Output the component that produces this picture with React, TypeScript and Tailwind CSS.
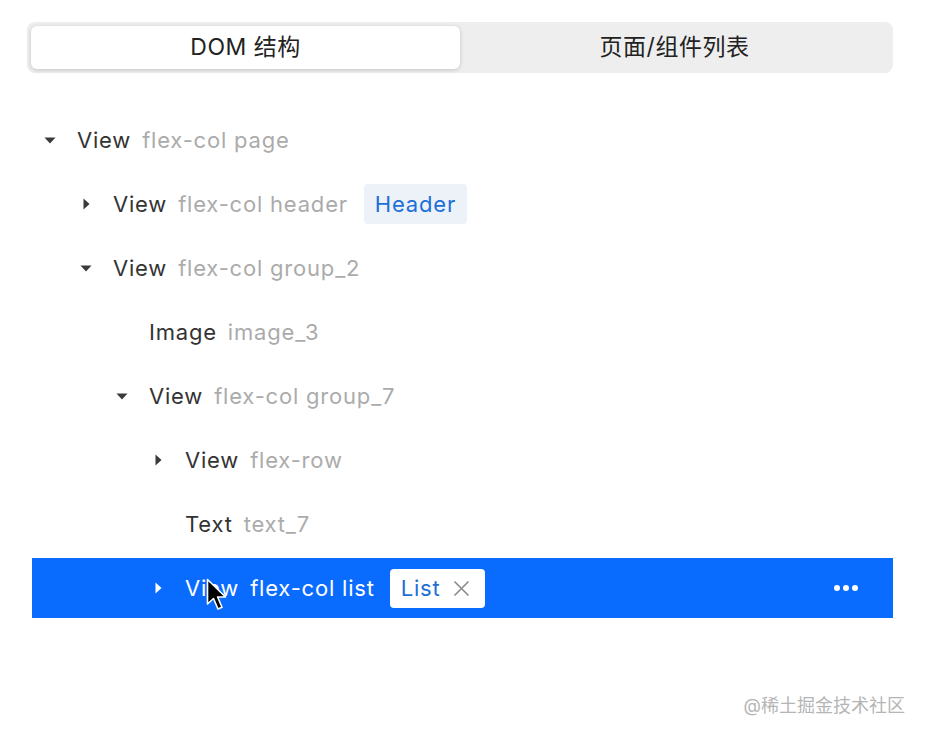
import React from 'react'

type Node = {
    tag: string
    cls: string
    level: number
    arrow?: 'down' | 'right'
    badge?: string
    selected?: boolean
}

const nodes: Node[] = [
    { tag: 'View', cls: 'flex-col page', level: 0, arrow: 'down' },
    { tag: 'View', cls: 'flex-col header', level: 1, arrow: 'right', badge: 'Header' },
    { tag: 'View', cls: 'flex-col group_2', level: 1, arrow: 'down' },
    { tag: 'Image', cls: 'image_3', level: 2 },
    { tag: 'View', cls: 'flex-col group_7', level: 2, arrow: 'down' },
    { tag: 'View', cls: 'flex-row', level: 3, arrow: 'right' },
    { tag: 'Text', cls: 'text_7', level: 3 },
    { tag: 'View', cls: 'flex-col list', level: 3, arrow: 'right', badge: 'List', selected: true },
]

const Arrow = ({ dir, light }: { dir?: 'down' | 'right'; light?: boolean }) => {
    const fill = light ? '#ffffff' : '#3a3a3a'
    return (
        <span className="w-[12px] h-[12px] flex items-center justify-center shrink-0">
            {dir === 'down' && (
                <svg width="12" height="7" viewBox="0 0 12 7">
                    <path d="M0.5 0.5 L11.5 0.5 L6 6.5 Z" fill={fill} />
                </svg>
            )}
            {dir === 'right' && (
                <svg width="7" height="12" viewBox="0 0 7 12">
                    <path d="M0.5 0.5 L6.5 6 L0.5 11.5 Z" fill={fill} />
                </svg>
            )}
        </span>
    )
}

const Row = ({ node }: { node: Node }) => {
    const sel = node.selected
    return (
        <div
            className={`h-[60px] flex items-center pr-[35px] ${sel ? 'bg-[#0a6cff]' : ''}`}
            style={{ paddingLeft: 12 + node.level * 36 }}
        >
            <Arrow dir={node.arrow} light={sel} />
            <span className={`ml-[21px] ${sel ? 'text-white' : 'text-[#333333]'}`}>{node.tag}</span>
            <span className={`ml-[11px] ${sel ? 'text-white' : 'text-[#ababab]'}`}>{node.cls}</span>
            {node.badge && !sel && (
                <span className="ml-[16px] h-[40px] px-[11px] flex items-center rounded-[4px] bg-[#edf2f8] text-[#1d6fd8]">
                    {node.badge}
                </span>
            )}
            {node.badge && sel && (
                <span className="ml-[15px] h-[39px] pl-[11px] pr-[15px] flex items-center rounded-[4px] bg-white text-[#1f6fd3]">
                    {node.badge}
                    <svg className="ml-[12px]" width="17" height="17" viewBox="0 0 17 17">
                        <path d="M1.5 1.5 L15.5 15.5 M15.5 1.5 L1.5 15.5" stroke="#8a8a8a" strokeWidth="1.6" />
                    </svg>
                </span>
            )}
            {sel && (
                <span className="ml-auto flex items-center gap-[3px]">
                    <span className="w-[6px] h-[6px] rounded-full bg-white" />
                    <span className="w-[6px] h-[6px] rounded-full bg-white" />
                    <span className="w-[6px] h-[6px] rounded-full bg-white" />
                </span>
            )}
        </div>
    )
}

export default function App() {
    return (
        <div
            className="relative w-full h-[737px] bg-white overflow-hidden text-[22px] tracking-[0.8px]"
            style={{ fontFamily: 'Inter, "Noto Sans CJK SC", sans-serif' }}
        >
            <div className="ml-[27px] mr-[33px] mt-[22px] h-[51px] p-[4px] flex rounded-[8px] bg-[#eeeeee] tracking-[0.5px]">
                <div className="flex-1 flex items-center justify-center rounded-[6px] bg-white shadow-[0_1px_4px_rgba(0,0,0,0.18)] text-[23px] text-[#222222]">
                    DOM 结构
                </div>
                <div className="flex-1 flex items-center justify-center text-[23px] text-[#222222]">
                    页面/组件列表
                </div>
            </div>

            <div className="mt-[37px] ml-[32px] mr-[33px] flex flex-col gap-[4px]">
                {nodes.map((n, i) => (
                    <Row key={i} node={n} />
                ))}
            </div>

            {/* mouse pointer */}
            <svg className="absolute left-[206px] top-[578px]" width="24" height="36" viewBox="0 0 24 36">
                <path
                    d="M1.5 1.5 L1.5 26 L7.5 20.5 L12 31 L16 29.3 L11.6 19 L19.5 19 Z"
                    fill="#000000"
                    stroke="#ffffff"
                    strokeWidth="1.6"
                    strokeLinejoin="round"
                />
            </svg>

            <div className="absolute right-[21px] bottom-[18px] text-[18px] tracking-normal text-[#b5b5b5]">@稀土掘金技术社区</div>
        </div>
    )
}
